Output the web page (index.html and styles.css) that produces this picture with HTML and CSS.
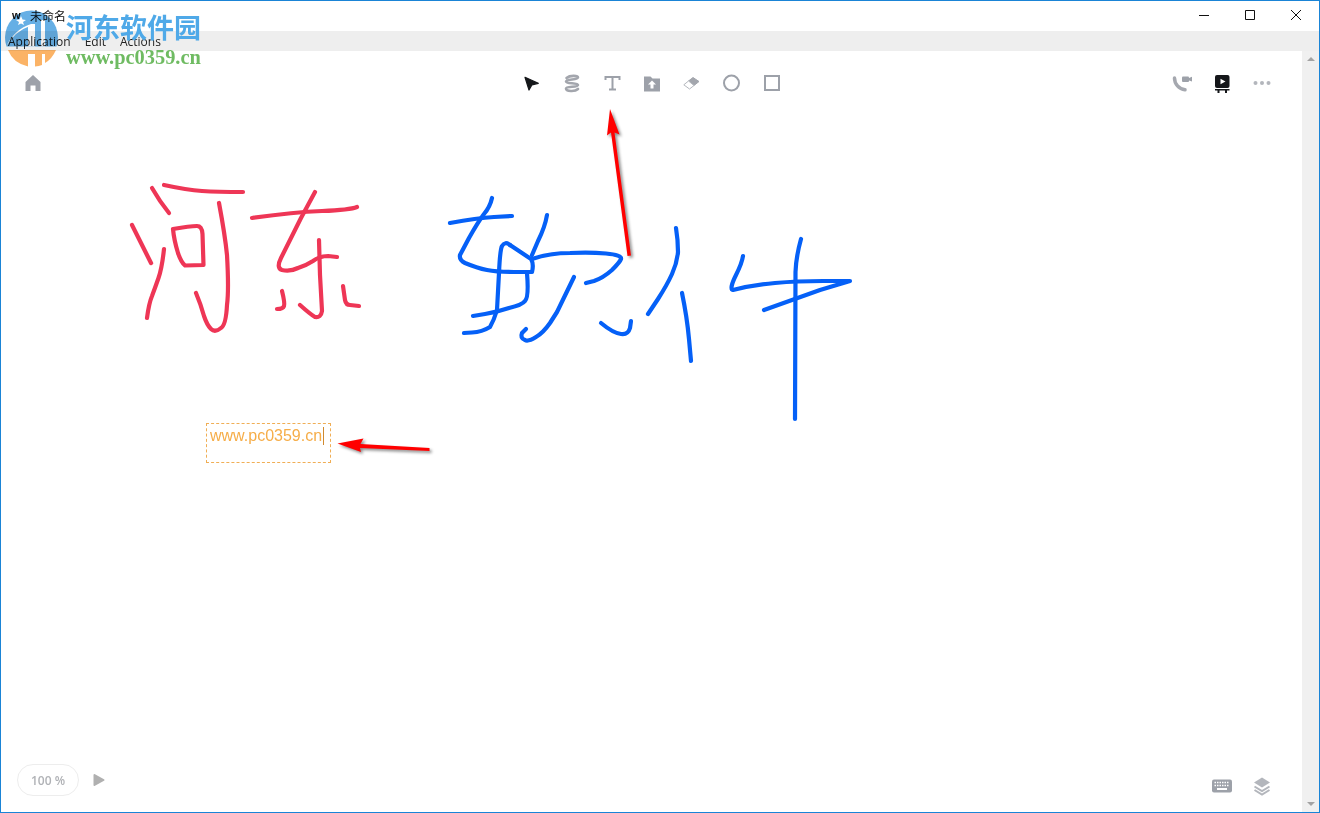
FILE: index.html
```html
<!DOCTYPE html>
<html lang="zh-CN">
<head>
<meta charset="utf-8">
<title>未命名</title>
<link rel="stylesheet" href="styles.css">
</head>
<body>
<div class="window">
  <header class="titlebar">
    <div class="title"><span class="app-mark">w</span><span class="doc-name">未命名</span></div>
    <div class="win-controls">
      <div class="win-btn"><svg class="win-icon" viewBox="0 0 12 12"><path d="M1 6.500H11"/></svg></div>
      <div class="win-btn"><svg class="win-icon" viewBox="0 0 12 12"><path d="M1.500 1.500H10.500V10.500H1.500Z"/></svg></div>
      <div class="win-btn"><svg class="win-icon" viewBox="0 0 12 12"><path d="M1 1L11 11M11 1L1 11"/></svg></div>
    </div>
  </header>
  <nav class="menubar"><span class="menu-item">Application</span><span class="menu-item">Edit</span><span class="menu-item">Actions</span></nav>
  <div class="workspace">
    <main class="canvas">
      <svg class="ink" viewBox="1 51 1301 760" aria-hidden="true">
        <g class="ink-red">
          <path d="M152 188Q160 202 169 213"/>
          <path d="M132 225L151 263"/>
          <path d="M164 249Q162 268 158.500 278Q155 288 152 296Q149 303 147 318"/>
          <path d="M164 185Q187 190 202 191Q217 192 243 192"/>
          <path d="M173 229Q190 226 197 226Q202 226 202.500 234L203.500 265L185 265.500Q181 262 178 253Q174 240 173 229"/>
          <path d="M219 203Q225 235 227 255Q229 290 227 305Q226 325 221 328Q215 333 211 329Q207 325 204 316Q201 305 196 293"/>
          <path d="M252 218Q293 212 322 211Q350 210 357 207"/>
          <path d="M315 192L301 218L281 258Q276 268 282 270Q290 272 298 268Q307 265 313 261Q320 256 328 256L337 257"/>
          <path d="M319 240L320 275L322 311Q321 318 315 317Q310 314 300 305"/>
          <path d="M282 291Q285 303 284 306Q283 309 277 309"/>
          <path d="M343 286L345 300Q346 305 350 305L359 306"/>
        </g>
        <g class="ink-blue">
          <path d="M492 198Q490 207 484 214Q478 222 469 238L460 255Q459 260 465 263Q477 268 487 270Q497 272 514 272L532 272Q534 264 531 259Q528 257 519 251L510 245"/>
          <path d="M450 223Q477 218 494 217L512 216"/>
          <path d="M510 245Q505 241 502 246Q500 250 499 273L497 310Q494 320 490 327Q482 332 472 332.500L464 333"/>
          <path d="M547 215Q545 227 538 241L532 255"/>
          <path d="M532 259Q550 253 570 253Q590 252 606 253.500Q622 255 621 259Q620 262 612 270Q603 278 594 281L586 283"/>
          <path d="M527 273Q529 297 525 301Q522 305 509 308Q497 312 485 314L473 316"/>
          <path d="M574 277L557 312L550 323Q543 333 536 337Q528 342 525 340Q520 338 522 333L526 329"/>
          <path d="M601 323Q613 333 621 334Q628 335 630 328L631 321"/>
          <path d="M676 228Q678 240 678 252Q677 263 672 274Q667 285 658 299L648 314"/>
          <path d="M682 293Q687 317 689 339L691 361"/>
          <path d="M743 256Q742 263 736 275Q729 289 733 290Q753 285 775 283Q797 281 823 281L850 281L820 290L764 310"/>
          <path d="M801 239Q796 257 795.500 272L795 419"/>
        </g>
        <g class="arrow">
          <polygon points="610,109 619.500,134.500 614.500,132.500 631,255.500 627.500,256 611,132.500 607,135.500"/>
          <polygon points="337.500,443.500 363.500,438.500 360.500,444 429.500,448 429.500,451 360,448 361,452"/>
        </g>
      </svg>

      <div class="textbox"><span class="textbox-text">www.pc0359.cn</span><span class="caret"></span></div>

      <div class="toolbar">
        <div class="tool-group tool-left">
          <div class="tool"><svg class="icon" viewBox="0 0 20 20"><path class="fill-grey" d="M10 2L17.500 9V18H12.500V12.500H7.500V18H2.500V9Z"/></svg></div>
        </div>
        <div class="tool-group">
          <div class="tool"><svg class="icon" viewBox="0 0 20 20"><polygon class="cursor" points="4,4.300 17.300,10.300 11,11.800 8,17"/></svg></div>
          <div class="tool"><svg class="icon" viewBox="0 0 20 20"><path class="spring" d="M5.500 5C9 2 17 2.500 17 4.500C17 7 5 6 5 8.500C5 11 17 9.500 17 12C17 14.500 5 13 5 15.500C5 18.500 14 19 17 16"/></svg></div>
          <div class="tool"><svg class="icon" viewBox="0 0 20 20"><path class="line-grey" d="M4.500 7V4H18.500V7M11.500 4V16M8 16.500H15"/></svg></div>
          <div class="tool"><svg class="icon" viewBox="0 0 20 20"><path class="fill-grey" d="M3 3.500H9.500L11.500 5.500H19V18.500H3Z"/><path class="fill-white" d="M11 7.500L15 11.500H12.500V15.500H9.500V11.500H7Z"/></svg></div>
          <div class="tool"><svg class="icon" viewBox="0 0 20 20"><polygon class="eraser-body" points="7.500,8 12,4.500 18,8.500 13,12.500"/><polygon class="eraser-tip" points="2.800,11.800 7.500,8 13,12.500 8.500,16"/></svg></div>
          <div class="tool"><svg class="icon" viewBox="0 0 20 20"><circle class="line-grey" cx="10.500" cy="10" r="7.500"/></svg></div>
          <div class="tool"><svg class="icon" viewBox="0 0 20 20"><rect class="line-grey" x="4" y="3" width="14" height="14"/></svg></div>
        </div>
        <div class="tool-group tool-right">
          <div class="tool"><svg class="icon" viewBox="0 0 20 20"><path class="phone" d="M3.500 5C3.500 11 8 16 14 16.800"/><rect class="fill-grey" x="11" y="3.500" width="7" height="5.500" rx="1"/><polygon class="fill-grey" points="18,5 21,3.800 21,8.500 18,7.500"/></svg></div>
          <div class="tool"><svg class="icon" viewBox="0 0 20 20"><rect class="fill-black" x="4" y="2" width="14.500" height="13" rx="2"/><polygon class="fill-white" points="9.500,5.800 14.500,8.500 9.500,11.200"/><path class="fill-black" d="M4 16H18.500V17.500H16V20H14V17.500H8.500V20H6.500V17.500H4Z"/></svg></div>
          <div class="tool"><svg class="icon" viewBox="0 0 20 20"><circle class="dot" cx="4.500" cy="10" r="2"/><circle class="dot" cx="11" cy="10" r="2"/><circle class="dot" cx="17.500" cy="10" r="2"/></svg></div>
        </div>
      </div>

      <div class="bottombar">
        <div class="zoom-group">
          <div class="zoom-pill">100 %</div>
          <svg class="play" viewBox="0 0 12 14"><path d="M1.500 2L10.500 7L1.500 12Z"/></svg>
        </div>
        <div class="bottom-tools">
          <div class="tool"><svg class="icon" viewBox="0 0 20 20"><rect class="fill-grey" x="0" y="3.500" width="20" height="13" rx="2"/><path class="keys" d="M2.500 6.500H17.500M2.500 9.500H17.500"/><rect class="fill-white" x="5" y="12" width="10" height="2"/></svg></div>
          <div class="tool"><svg class="icon" viewBox="0 0 20 20"><polygon class="fill-light" points="10,1.500 18,6.500 10,11.500 2,6.500"/><path class="layer-line" d="M2.500 10.500L10 15L17.500 10.500M2.500 14L10 18.500L17.500 14"/></svg></div>
        </div>
      </div>
    </main>
    <aside class="scrollbar"><span class="scroll-up"></span><span class="scroll-down"></span></aside>
  </div>
</div>

<div class="watermark">
  <svg class="wm-logo" viewBox="0 0 54 58" aria-hidden="true">
    <path class="wm-blue" d="M1.500 37.500Q0 33 0 28.500A26.500 27 0 1 1 53 28.500Q53 33 51.500 37.500Z"/>
    <path class="wm-orange" d="M3 41H51Q47 50 40 54V45H37V56Q34 57 30 57.500V45H23V57.500Q8 54 3 41Z"/>
    <polygon class="wm-star" points="16,7 17.500,10.500 21,11 18,13 19,16 16,14.500 13,16 14,13 11,11 14.500,10.500"/>
    <path class="wm-cut" d="M1 37.500Q10 22 25 17L23 18V37.500H30V15L26 15Q10 20 1 37.500ZM36 11H40V37.500H36Z"/>
  </svg>
  <div class="wm-texts">
    <div class="wm-name">河东软件园</div>
    <div class="wm-url">www.pc0359.cn</div>
  </div>
</div>
</body>
</html>
```
FILE: styles.css
```css
* { box-sizing: border-box; }
html, body { margin: 0; padding: 0; height: 100%; background: #fff; overflow: hidden; }
body { font-family: "Open Sans", "Noto Sans CJK SC", sans-serif; position: relative; }

.window {
  width: 1320px;
  height: 813px;
  border: 1px solid #1a84d6;
  display: flex;
  flex-direction: column;
}

.titlebar {
  height: 30px;
  display: flex;
  justify-content: space-between;
  background: #fff;
  flex: none;
}
.title { display: flex; align-items: center; padding: 0 0 2px 11px; font-size: 12px; color: #111; }
.app-mark { width: 18px; font: bold 11px "Liberation Sans", sans-serif; }
.doc-name { font-family: "Noto Sans CJK SC", sans-serif; font-size: 12px; }
.win-controls { display: flex; }
.win-btn { width: 46px; display: flex; align-items: flex-start; justify-content: center; padding-top: 8px; }
.win-icon { width: 12px; height: 12px; fill: none; stroke: #111; stroke-width: 1; }

.menubar {
  height: 20px;
  flex: none;
  background: #eeeeee;
  display: flex;
  align-items: center;
  padding-left: 7px;
  gap: 14px;
  font-size: 12px;
  color: #222;
}

.workspace { flex: 1; display: flex; min-height: 0; }

.canvas {
  flex: 1;
  position: relative;
  background: #fff;
  display: flex;
  flex-direction: column;
  justify-content: space-between;
  padding: 22px 0 16px;
}
.ink { position: absolute; left: 0; top: 0; width: 1301px; height: 760px; }
.ink g path { fill: none; stroke-linecap: round; stroke-linejoin: round; stroke-width: 4.200; }
.ink-red path { stroke: #ee3656; }
.ink-blue path { stroke: #0560f7; }
.arrow { fill: #ff0000; filter: drop-shadow(2px 2px 1.500px rgba(0, 0, 0, .45)); }

.textbox {
  position: absolute;
  left: 205px;
  top: 372px;
  width: 125px;
  height: 40px;
  border: 1px dashed #f0ae55;
  padding: 2px 0 0 3px;
  display: flex;
  align-items: flex-start;
}
.textbox-text { font: 16px/20px "Liberation Sans", sans-serif; color: #f6ad48; }
.caret { width: 1px; height: 18px; margin: 1px 0 0 1px; background: #d08a30; }

.toolbar { display: grid; grid-template-columns: 510px auto 1fr; position: relative; }
.tool-group { display: flex; }
.tool-left { padding-left: 12px; }
.tool-right { justify-content: flex-end; padding-right: 21px; }
.tool { width: 40px; height: 20px; display: flex; justify-content: center; }
.icon { width: 20px; height: 20px; overflow: visible; }

.fill-grey { fill: #9da1a9; }
.fill-light { fill: #b3b6bc; }
.fill-black { fill: #15171a; }
.fill-white { fill: #fff; }
.line-grey { fill: none; stroke: #9da1a9; stroke-width: 2; }
.cursor { fill: #15171a; stroke: #15171a; stroke-width: 1.200; stroke-linejoin: round; }
.spring { fill: none; stroke: #a3a6ad; stroke-width: 2.600; stroke-linecap: round; }
.eraser-body { fill: #a3a6ad; stroke: #a3a6ad; stroke-width: 1; stroke-linejoin: round; }
.eraser-tip { fill: #fff; stroke: #b5b8be; stroke-width: 1; stroke-linejoin: round; }
.phone { fill: none; stroke: #a5a8af; stroke-width: 3.500; stroke-linecap: round; }
.dot { fill: #b3b6bc; }
.keys { fill: none; stroke: #fff; stroke-width: 1.500; stroke-dasharray: 1.500 1; }
.layer-line { fill: none; stroke: #b3b6bc; stroke-width: 2; }

.bottombar { display: flex; justify-content: space-between; align-items: flex-start; position: relative; }
.zoom-group { display: flex; align-items: center; gap: 14px; padding-left: 16px; }
.zoom-pill {
  width: 62px;
  height: 32px;
  border: 1px solid #ededed;
  border-radius: 16px;
  display: flex;
  align-items: center;
  justify-content: center;
  font-size: 12px;
  font-weight: 600;
  color: #b0b2b6;
}
.play { width: 12px; height: 14px; fill: #b0b0b0; stroke: #b0b0b0; stroke-width: 2; stroke-linejoin: round; overflow: visible; }
.bottom-tools { display: flex; padding: 12px 20px 0 0; }

.scrollbar {
  width: 17px;
  flex: none;
  background: #f0f0f0;
  display: flex;
  flex-direction: column;
  justify-content: space-between;
  align-items: center;
  padding: 6px 0;
}
.scroll-up { border: 4px solid transparent; border-top: 0; border-bottom: 4px solid #a3a3a3; width: 0; height: 0; }
.scroll-down { border: 4px solid transparent; border-bottom: 0; border-top: 4px solid #a3a3a3; width: 0; height: 0; }

.watermark { position: absolute; left: 5px; top: 9px; display: flex; gap: 7px; pointer-events: none; }
.wm-logo { width: 54px; height: 58px; flex: none; mix-blend-mode: multiply; opacity: .9; }
.wm-blue { fill: #55a6e2; }
.wm-orange { fill: #fbab55; }
.wm-star { fill: #fff; }
.wm-cut { fill: #fff; }
.wm-texts { display: flex; flex-direction: column; padding-top: 3px; }
.wm-name { font: 700 27px/30px "Noto Sans CJK SC", sans-serif; color: #4fa9e8; white-space: nowrap; }
.wm-url { font: 700 20.400px/22px "Liberation Serif", serif; color: #6fbb62; margin-top: 4px; white-space: nowrap; }
```
